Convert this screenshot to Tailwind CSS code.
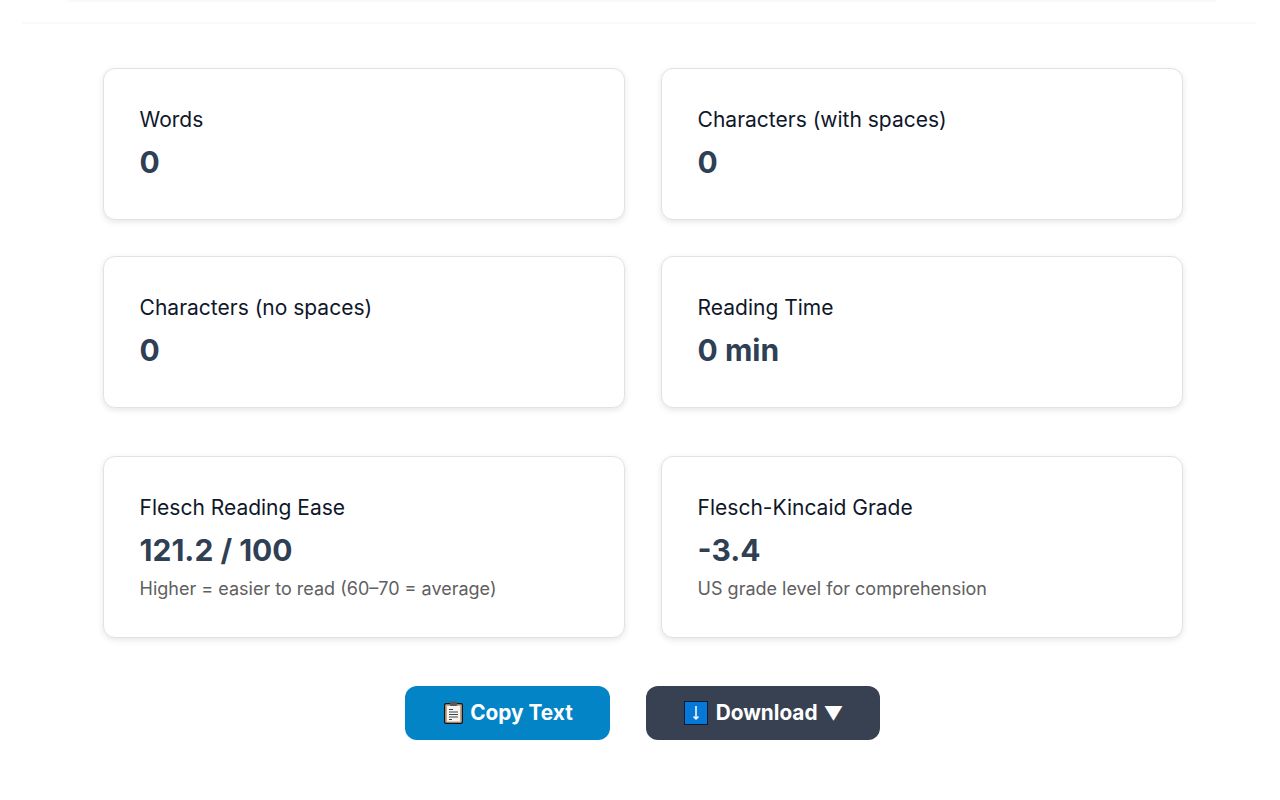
<!DOCTYPE html>
<html lang="en">
<head>
    <meta charset="UTF-8">
    <meta name="viewport" content="width=device-width, initial-scale=1.0">
    <title>Text Statistics</title>
    <script src="https://cdn.jsdelivr.net/npm/@tailwindcss/browser@4"></script>
</head>
<body class="bg-white h-[800px] overflow-hidden font-['Inter',sans-serif]">
    <!-- Bottom edges of the scrolled-away editor panels -->
    <div class="h-[23px]">
        <div class="ml-[68px] w-[1148px] h-[2px] bg-[#f9f9f9]"></div>
        <div class="ml-[22px] w-[1234px] h-[2px] mt-[20px] bg-[#fafafa]"></div>
    </div>

    <main class="ml-[103px] w-[1080px] pt-[45px]">
        <!-- Count cards -->
        <section class="grid grid-cols-2 gap-9">
            <div class="h-[152px] bg-white border border-[#e2e2e2] rounded-xl shadow-[0_2px_6px_rgba(0,0,0,0.1)] pl-[35.6px] pt-9">
                <p class="text-[21px] leading-[30px] text-[#0f172a]">Words</p>
                <p class="text-[30px] leading-[36px] mt-[9px] font-bold text-[#2f3f54]">0</p>
            </div>
            <div class="h-[152px] bg-white border border-[#e2e2e2] rounded-xl shadow-[0_2px_6px_rgba(0,0,0,0.1)] pl-[35.6px] pt-9">
                <p class="text-[21px] leading-[30px] text-[#0f172a]">Characters (with spaces)</p>
                <p class="text-[30px] leading-[36px] mt-[9px] font-bold text-[#2f3f54]">0</p>
            </div>
            <div class="h-[152px] bg-white border border-[#e2e2e2] rounded-xl shadow-[0_2px_6px_rgba(0,0,0,0.1)] pl-[35.6px] pt-9">
                <p class="text-[21px] leading-[30px] text-[#0f172a]">Characters (no spaces)</p>
                <p class="text-[30px] leading-[36px] mt-[9px] font-bold text-[#2f3f54]">0</p>
            </div>
            <div class="h-[152px] bg-white border border-[#e2e2e2] rounded-xl shadow-[0_2px_6px_rgba(0,0,0,0.1)] pl-[35.6px] pt-9">
                <p class="text-[21px] leading-[30px] text-[#0f172a]">Reading Time</p>
                <p class="text-[30px] leading-[36px] mt-[9px] font-bold text-[#2f3f54]">0 min</p>
            </div>
        </section>

        <!-- Readability cards -->
        <section class="grid grid-cols-2 gap-9 mt-12">
            <div class="h-[182px] bg-white border border-[#e2e2e2] rounded-xl shadow-[0_2px_6px_rgba(0,0,0,0.1)] pl-[35.6px] pt-9">
                <p class="text-[21px] leading-[30px] text-[#0f172a]">Flesch Reading Ease</p>
                <p class="text-[30px] leading-[36px] mt-[9px] font-bold text-[#2f3f54]">121.2 / 100</p>
                <p class="text-[18px] leading-[26px] mt-[8px] text-[#606060]">Higher = easier to read (60–70 = average)</p>
            </div>
            <div class="h-[182px] bg-white border border-[#e2e2e2] rounded-xl shadow-[0_2px_6px_rgba(0,0,0,0.1)] pl-[35.6px] pt-9">
                <p class="text-[21px] leading-[30px] text-[#0f172a]">Flesch-Kincaid Grade</p>
                <p class="text-[30px] leading-[36px] mt-[9px] font-bold text-[#2f3f54]">-3.4</p>
                <p class="text-[18px] leading-[26px] mt-[8px] text-[#606060]">US grade level for comprehension</p>
            </div>
        </section>

        <!-- Actions -->
        <div class="flex justify-center gap-9 mt-12 mr-[1px]">
            <button class="h-[54px] w-[205px] flex items-center justify-center gap-[6px] rounded-xl bg-[#0284c7] text-white text-[20.8px] font-bold">
                <svg class="w-[22px] h-[24px]" viewBox="0 0 22 24">
                    <rect x="2" y="2" width="19" height="21" rx="2" fill="#10141a"/>
                    <rect x="3.2" y="3.2" width="16.6" height="18.6" rx="1" fill="#c8a583"/>
                    <rect x="5" y="5" width="13" height="15.5" fill="#f5f5f5"/>
                    <rect x="8" y="0.5" width="7" height="4.5" rx="1" fill="#5a5a5a"/>
                    <path d="M7 8.5h4M7 11h9M7 13.5h9M7 16h9M7 18.5h3" stroke="#444" stroke-width="1"/>
                </svg>
                <span>Copy Text</span>
            </button>
            <button class="h-[54px] w-[234px] pl-px flex items-center justify-center gap-[8px] rounded-xl bg-[#374151] text-white text-[20.8px] font-bold">
                <svg class="w-[24px] h-[24px]" viewBox="0 0 24 24">
                    <rect width="24" height="24" fill="#0b1b33"/>
                    <rect x="1" y="1" width="22" height="22" fill="#0678d8"/>
                    <path d="M12 5v13M9.5 15.5 12 18l2.5-2.5" stroke="#fff" stroke-width="1.5" fill="none"/>
                </svg>
                <span>Download <span class="text-[19px] ml-px">▼</span></span>
            </button>
        </div>
    </main>
</body>
</html>
